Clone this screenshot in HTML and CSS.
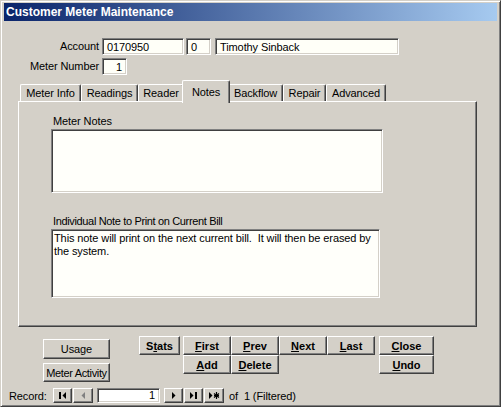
FILE: index.html
```html
<!DOCTYPE html>
<html>
<head>
<meta charset="utf-8">
<title>Customer Meter Maintenance</title>
<link rel="stylesheet" href="styles.css">
</head>
<body>
<div class="window">
  <div class="titlebar">Customer Meter Maintenance</div>

  <div class="row row-account">
    <span class="lbl">Account</span>
    <div class="field f-acct">0170950</div>
    <div class="field f-seq">0</div>
    <div class="field f-name">Timothy Sinback</div>
  </div>
  <div class="row row-meter">
    <span class="lbl">Meter Number</span>
    <div class="field f-meter">1</div>
  </div>

  <div class="tabs">
    <div class="tab w-info">Meter Info</div>
    <div class="tab w-readings">Readings</div>
    <div class="tab w-reader">Reader</div>
    <div class="tab w-notes active">Notes</div>
    <div class="tab w-backflow">Backflow</div>
    <div class="tab w-repair">Repair</div>
    <div class="tab w-advanced">Advanced</div>
  </div>

  <div class="panel">
    <div class="plabel">Meter Notes</div>
    <div class="memo memo1"></div>
    <div class="plabel plabel2">Individual Note to Print on Current Bill</div>
    <div class="memo memo2">This note will print on the next current bill.&nbsp; It will then be erased by the system.</div>
  </div>

  <div class="actions">
    <div class="leftcol">
      <div class="btn btn-usage">Usage</div>
      <div class="btn btn-activity">Meter Activity</div>
    </div>
    <div class="btn bold btn-stats">S<u>t</u>ats</div>
    <div class="navgrid">
      <div class="btn bold"><u>F</u>irst</div>
      <div class="btn bold"><u>P</u>rev</div>
      <div class="btn bold"><u>N</u>ext</div>
      <div class="btn bold"><u>L</u>ast</div>
      <div class="btn bold"><u>A</u>dd</div>
      <div class="btn bold"><u>D</u>elete</div>
    </div>
    <div class="closecol">
      <div class="btn bold"><u>C</u>lose</div>
      <div class="btn bold"><u>U</u>ndo</div>
    </div>
  </div>

  <div class="recordbar">
    <span class="reclabel">Record:</span>
    <div class="nbtn nb-first"><svg width="9" height="7" viewBox="0 0 9 7"><rect x="1" y="0" width="2" height="7" fill="#000"/><polygon points="8,0 8,7 4.5,3.5" fill="#000"/></svg></div>
    <div class="nbtn nb-prev"><svg width="9" height="7" viewBox="0 0 9 7"><polygon points="6,0 6,7 2.5,3.5" fill="#808080"/></svg></div>
    <div class="recfield">1</div>
    <div class="nbtn nb-next"><svg width="9" height="7" viewBox="0 0 9 7"><polygon points="3,0 3,7 6.5,3.5" fill="#000"/></svg></div>
    <div class="nbtn nb-last"><svg width="9" height="7" viewBox="0 0 9 7"><polygon points="1,0 1,7 4.5,3.5" fill="#000"/><rect x="6" y="0" width="2" height="7" fill="#000"/></svg></div>
    <div class="nbtn nb-new"><svg width="12" height="7" viewBox="0 0 12 7"><polygon points="1,0 1,7 4.5,3.5" fill="#000"/><path d="M8.5 0V7M6 1.5L11 5.5M11 1.5L6 5.5M6 3.5H11" stroke="#000" stroke-width="1.2" fill="none"/></svg></div>
    <span class="recof">of&nbsp; 1 (Filtered)</span>
  </div>
</div>
</body>
</html>
```
FILE: styles.css
```css
* { box-sizing: border-box; }
html, body { margin: 0; padding: 0; background: #d4d0c8; }
body {
  font-family: "Liberation Sans", Arial, sans-serif;
  font-size: 11px;
  letter-spacing: -0.1px;
  color: #000;
}
.window {
  width: 501px;
  height: 407px;
  background: #d4d0c8;
  border: 1px solid;
  border-color: #d4d0c8 #404040 #404040 #d4d0c8;
  box-shadow: inset 1px 1px #fff, inset -1px -1px #808080;
  padding: 2px 3px 2px 3px;
  display: flex;
  flex-direction: column;
}
.titlebar {
  flex: none;
  height: 18px;
  background: linear-gradient(to right, #0a246a, #a6caf0);
  color: #fff;
  font-weight: bold;
  font-size: 12px;
  letter-spacing: 0;
  line-height: 18px;
  padding-left: 2px;
}
.row { display: flex; align-items: center; height: 17px; flex: none; }
.row-account { margin-top: 17px; }
.row-meter { margin-top: 3px; }
.lbl { width: 95px; text-align: right; line-height: 13px; }
.field {
  height: 17px;
  background: #fffff8;
  border: 1px solid;
  border-color: #808080 #fff #fff #808080;
  box-shadow: inset 1px 1px #404040, inset -1px -1px #d4d0c8;
  line-height: 14px;
  padding: 1px 2px 0 4px;
  white-space: nowrap;
}
.f-acct { width: 82px; margin-left: 3px; }
.f-seq { width: 25px; margin-left: 2px; }
.f-name { width: 184px; margin-left: 4px; }
.f-meter { width: 25px; margin-left: 3px; text-align: right; padding-right: 4px; }

.tabs {
  flex: none;
  display: flex;
  align-items: flex-end;
  margin-top: 5px;
  margin-left: 16px;
  height: 21px;
  position: relative;
  z-index: 1;
}
.tab {
  height: 17px;
  border: 1px solid;
  border-color: #fff #404040 transparent #fff;
  border-bottom: none;
  box-shadow: inset -1px 0 #808080;
  border-radius: 2px 2px 0 0;
  text-align: center;
  line-height: 15px;
  padding-top: 1px;
  background: #d4d0c8;
  white-space: nowrap;
}
.w-info { width: 61px; }
.w-readings { width: 57px; }
.w-reader { width: 46px; }
.w-notes { width: 44px; }
.w-backflow { width: 55px; }
.w-repair { width: 43px; }
.w-advanced { width: 60px; }
.tab.active {
  width: 48px;
  height: 23px;
  margin: 0 -2px -2px;
  padding-top: 4px;
  position: relative;
  z-index: 2;
}

.panel {
  flex: none;
  margin-left: 14px;
  width: 459px;
  height: 226px;
  border: 1px solid;
  border-color: #fff #404040 #404040 #fff;
  box-shadow: inset -1px -1px #808080;
  padding: 13px 0 0 32px;
}
.plabel { line-height: 13px; margin-left: 2px; }
.plabel2 { margin-top: 22px; letter-spacing: -0.35px; }
.memo {
  margin-top: 1px;
  background: #fffffa;
  border: 1px solid;
  border-color: #808080 #fff #fff #808080;
  box-shadow: inset 1px 1px #404040, inset -1px -1px #d4d0c8;
  padding: 2px 0 0 2px;
  line-height: 13px;
}
.memo1 { width: 332px; height: 64px; }
.memo2 { width: 329px; height: 69px; }

.actions {
  flex: none;
  display: flex;
  align-items: flex-start;
  margin-top: 9px;
}
.btn {
  background: #d4d0c8;
  border: 1px solid;
  border-color: #fff #404040 #404040 #fff;
  box-shadow: inset -1px -1px #808080;
  display: flex;
  align-items: center;
  justify-content: center;
  height: 19px;
  white-space: nowrap;
}
.bold { font-weight: bold; letter-spacing: 0; }
.btn u { text-decoration: underline; text-underline-offset: 1px; }
.leftcol {
  margin-left: 39px;
  margin-top: 3px;
  display: flex;
  flex-direction: column;
  gap: 4px;
  width: 67px;
}
.btn-usage { height: 20px; }
.btn-activity { letter-spacing: -0.35px; }
.btn-stats { margin-left: 29px; width: 41px; }
.navgrid {
  margin-left: 3px;
  display: grid;
  grid-template-columns: 48px 48px 48px 48px;
  grid-auto-rows: 19px;
}
.closecol {
  margin-left: 4px;
  width: 55px;
  display: flex;
  flex-direction: column;
}

.recordbar {
  flex: none;
  display: flex;
  align-items: center;
  height: 15px;
  margin-top: 6px;
}
.reclabel { margin-left: 5px; width: 44px; }
.nbtn {
  width: 19px;
  height: 15px;
  background: #d4d0c8;
  border: 1px solid;
  border-color: #fff #404040 #404040 #fff;
  box-shadow: inset -1px -1px #808080;
  display: flex;
  align-items: center;
  justify-content: center;
}
.nb-prev { margin-left: 1px; width: 20px; }
.recfield {
  margin-left: 4px;
  width: 63px;
  height: 15px;
  background: #fff;
  border: 1px solid;
  border-color: #808080 #fff #fff #808080;
  box-shadow: inset 1px 1px #404040, inset -1px -1px #d4d0c8;
  text-align: right;
  line-height: 13px;
  padding-right: 4px;
}
.nb-next { margin-left: 4px; }
.nb-last { margin-left: 1px; }
.nb-new { margin-left: 1px; width: 20px; }
.recof { margin-left: 5px; }
```
